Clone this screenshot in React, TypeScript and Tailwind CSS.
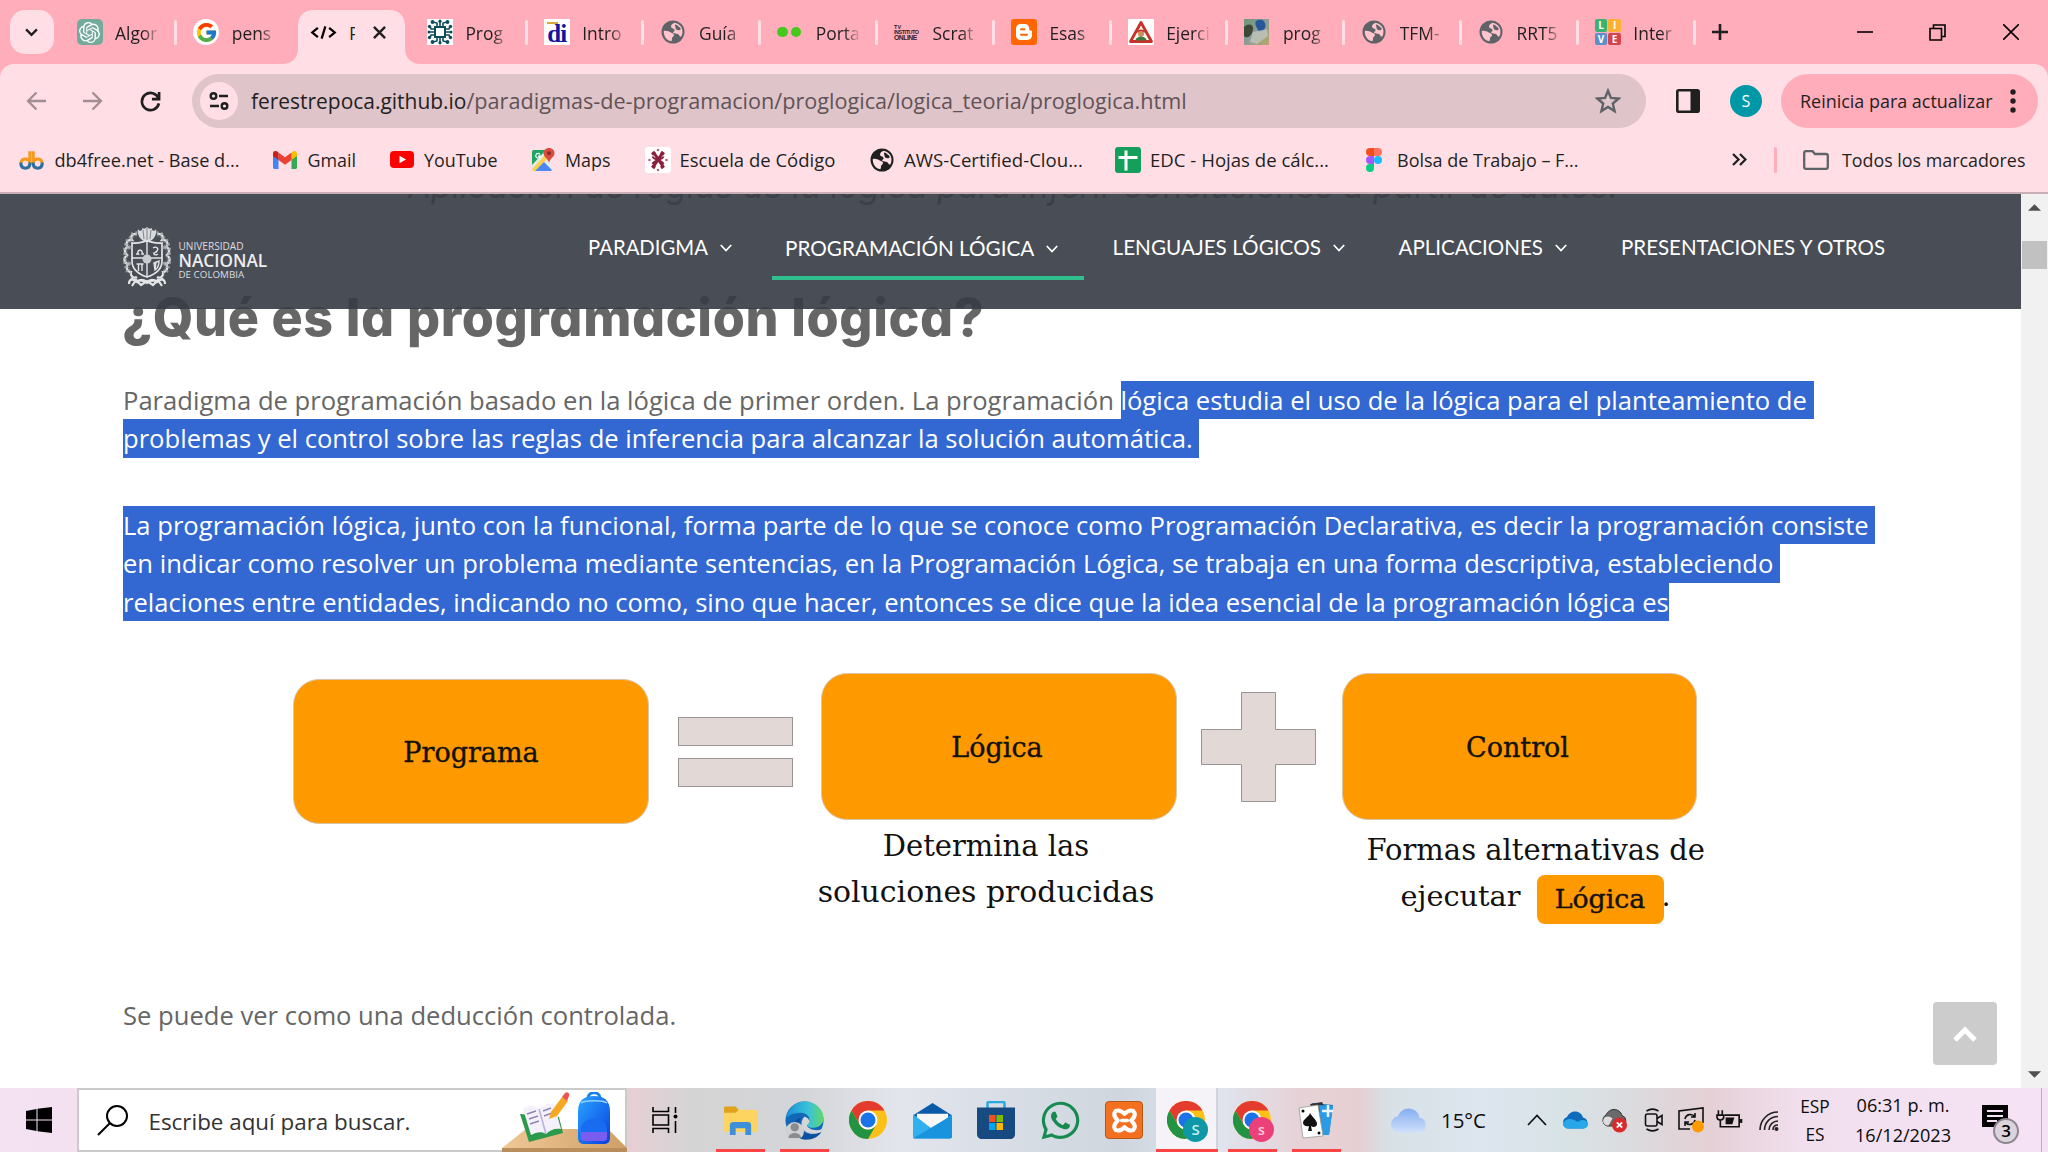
import type { ReactNode } from 'react';
import { FcGoogle } from 'react-icons/fc';
import { FaWhatsapp } from 'react-icons/fa';
import { SiOpenai } from 'react-icons/si';

const OPEN = "font-['Open_Sans',sans-serif]";
const SLAB = "font-['DejaVu_Serif',serif]";

/* ---------- favicons ---------- */

function Globe({ color, land = '#ffc4cd' }: { color: string; land?: string }) {
  return (
    <svg viewBox="0 0 24 24" className="h-[24px] w-[24px]">
      <circle cx="12" cy="12" r="11.500" fill={color} />
      <path d="M2.800 11c2.500-.6 5 .2 7 1.600 1.500 1 3.200.6 3.200 2.400s-2 1.500-2 3.500c0 1.300-.2 2-.8 2.800C6 20.500 2.500 16.500 2.800 11z" fill={land} />
      <path d="M13.500 2.800c-1.800 1-3.500 1.700-3.500 3.700s2.600 1.500 3.500 3.200-2.500 2-1 3.300 4.500.2 5.500 2 1.500 1.800 2.500 1.300c2.500-5.500.5-12-7-13.500z" fill={land} />
      <path d="M14.500 4.500c2 .3 2.700 2 4 2.800s1.800 2.700-.2 3-3.800-.8-3.800-2.500-1.200-2.500 0-3.300z" fill={color} />
    </svg>
  );
}

function ChipIcon() {
  return (
    <svg viewBox="0 0 26 26" className="h-[26px] w-[26px]">
      <rect width="26" height="26" fill="#fff" />
      <g stroke="#0f4c5c" strokeWidth="1.600" fill="none">
        <rect x="8" y="8" width="10" height="10" strokeWidth="2" />
        <path d="M10 7V4L6 3M13 7V2M16 7V4l4-1M10 19v3l-4 1M13 19v5M16 19v3l4 1M7 10H4L3 7M7 13H2M7 16H4l-1 3M19 10h3l1-3M19 13h5M19 16h3l1 3" />
      </g>
      <g fill="#0f4c5c">
        <circle cx="5.500" cy="3" r="1.900" /><circle cx="20.500" cy="3" r="1.900" /><circle cx="5.500" cy="23" r="1.900" /><circle cx="20.500" cy="23" r="1.900" />
        <circle cx="13" cy="2.200" r="1.600" /><circle cx="13" cy="23.800" r="1.600" />
        <circle cx="2.500" cy="7.500" r="1.700" /><circle cx="2" cy="13" r="1.500" /><circle cx="2.500" cy="18.500" r="1.700" /><circle cx="23.500" cy="7.500" r="1.700" /><circle cx="24" cy="13" r="1.500" /><circle cx="23.500" cy="18.500" r="1.700" />
      </g>
    </svg>
  );
}

function DiIcon() {
  return (
    <span className="relative flex h-[26px] w-[26px] items-end justify-center bg-white font-['Liberation_Serif',serif] text-[25px] leading-[23px] font-bold tracking-[-1px] text-[#1414a0]">
      <span className="absolute top-[3px] left-[3px] h-[2px] w-[11px] bg-[#d9a63a]" />
      di
    </span>
  );
}

function InstitutoIcon() {
  return (
    <span className="flex h-[26px] w-[26px] flex-col justify-center font-['Liberation_Sans',sans-serif] text-[5.500px] leading-[5px] font-bold text-[#3a1a22]">
      <span>TV</span>
      <span className="tracking-[-0.500px]">INSTITUTO</span>
      <span className="text-[6.800px] tracking-[-0.500px]">ONLINE</span>
    </span>
  );
}

function BloggerIcon() {
  return (
    <svg viewBox="0 0 26 26" className="h-[26px] w-[26px]">
      <rect width="26" height="26" rx="3" fill="#ff6600" />
      <path d="M9.500 5h4.300c2.700 0 4.400 2 4.400 4.500 0 1.500.3 2 1.300 2 .9 0 1.500.4 1.500 1.500v3.300c0 2.800-2 4.700-4.600 4.700H9.600C7 21 5 19 5 16.400V9.700C5 7 7 5 9.500 5z" fill="#fff" />
      <path d="M10 10.200h3.500M10 15.800h6" stroke="#ff6600" strokeWidth="2" strokeLinecap="round" />
    </svg>
  );
}

function WarnIcon() {
  return (
    <svg viewBox="0 0 26 26" className="h-[26px] w-[26px]">
      <rect width="26" height="26" fill="#fff" />
      <path d="M13 3.500 23.500 22.500H2.500z" fill="#fffdf0" stroke="#c8312b" strokeWidth="2.800" strokeLinejoin="round" />
      <path d="M9 13.500c0-4 8-4 8 0z" fill="#c8312b" />
      <circle cx="13" cy="15" r="3" fill="#c98f60" />
      <path d="M7.500 21.500c0-5 11-5 11 0z" fill="#3a7a3c" />
    </svg>
  );
}

function PhotoIcon() {
  return (
    <svg viewBox="0 0 26 26" className="h-[26px] w-[26px]">
      <defs><linearGradient id="photo" x1="0" y1="0" x2="1" y2="1"><stop offset="0" stopColor="#6f9478" /><stop offset=".5" stopColor="#8d9c98" /><stop offset="1" stopColor="#b5a868" /></linearGradient></defs>
      <rect width="25" height="26" fill="url(#photo)" />
      <path d="M12 2c5-3 11 0 9 7-1 4-6 5-7 2s-4-6-2-9z" fill="#27579b" />
      <path d="M0 8c4-4 9-3 9 1s-2 8-5 9-5-1-4-4z" fill="#3c4736" />
      <path d="M9 13l14-3 1 7-11 8-7-2z" fill="#c0c6bb" opacity=".8" />
    </svg>
  );
}

function LiveIcon() {
  return (
    <span className="grid h-[26px] w-[26px] grid-cols-2 gap-px font-['Open_Sans',sans-serif] text-[10px] leading-[12px] font-bold text-white">
      <span className="rounded-[2px] bg-[#3cb371] text-center">L</span>
      <span className="rounded-[2px] bg-[#fbb034] text-center">I</span>
      <span className="rounded-[2px] bg-[#5a8fcb] text-center">V</span>
      <span className="rounded-[2px] bg-[#d7434c] text-center">E</span>
    </span>
  );
}

function CodeIcon() {
  return (
    <svg viewBox="0 0 28 16" className="h-[15px] w-[27px]" fill="none" stroke="#000" strokeWidth="2.400">
      <path d="M8 3 2 8l6 5M20 3l6 5-6 5M16 1.500 12 14.500" />
    </svg>
  );
}

/* ---------- tab strip ---------- */

const tabs: { icon: ReactNode; label: string; sep: boolean; active?: boolean }[] = [
  { icon: <span className="flex h-[26px] w-[26px] items-center justify-center rounded-[5px] bg-[#74aa9c]"><SiOpenai className="h-[21px] w-[21px] text-white" /></span>, label: 'Algor', sep: true },
  { icon: <span className="flex h-[26px] w-[26px] items-center justify-center rounded-full bg-white"><FcGoogle className="h-[23px] w-[23px]" /></span>, label: 'pens', sep: false },
  { icon: <CodeIcon />, label: 'P', sep: false, active: true },
  { icon: <ChipIcon />, label: 'Prog', sep: true },
  { icon: <DiIcon />, label: 'Intro', sep: true },
  { icon: <Globe color="#5f6368" />, label: 'Guía', sep: true },
  { icon: <span className="flex h-[26px] w-[26px] items-center gap-[3px]"><span className="h-[10px] w-[10.500px] rounded-full bg-[#43c81e]" /><span className="h-[10px] w-[10.500px] rounded-full bg-[#43c81e]" /></span>, label: 'Porta', sep: true },
  { icon: <InstitutoIcon />, label: 'Scrat', sep: true },
  { icon: <BloggerIcon />, label: 'Esas', sep: true },
  { icon: <WarnIcon />, label: 'Ejerci', sep: true },
  { icon: <PhotoIcon />, label: 'prog', sep: true },
  { icon: <Globe color="#5f6368" />, label: 'TFM-', sep: true },
  { icon: <Globe color="#5f6368" />, label: 'RRT5', sep: true },
  { icon: <LiveIcon />, label: 'Inter', sep: true },
];

function TabStrip() {
  return (
    <div className="flex h-[64px] items-start bg-[#ffadbb]">
      <div className="mt-[10px] ml-[9.500px] flex h-[44px] w-[44.500px] items-center justify-center rounded-[15px] bg-[#ffdfe5]">
        <svg viewBox="0 0 14 10" className="h-[9px] w-[13px]" fill="none" stroke="#1f1f1f" strokeWidth="2.600"><path d="m1 1.500 6 6 6-6" /></svg>
      </div>
      <div className="ml-[5.500px] flex">
        {tabs.map((t, i) =>
          t.active ? (
            <div key={i} className="relative flex h-[64px] w-[116.800px] items-center pl-[17px]">
              <svg viewBox="0 0 139 54" className="absolute top-[10px] left-[-11px] h-[54px] w-[139px]">
                <path d="M0 54c10 0 16-6 16-16V16C16 6 22 0 32 0h75c10 0 16 6 16 16v22c0 10 6 16 16 16z" fill="#ffdfe5" />
              </svg>
              <span className="relative">{t.icon}</span>
              <span className={`relative ml-[12px] w-[6px] overflow-hidden pt-[1px] text-[18px] leading-[24px] text-[#1f1f1f] ${OPEN}`}>{t.label}</span>
              <svg viewBox="0 0 14 14" className="relative ml-[18px] h-[13px] w-[13px]" stroke="#1f1f1f" strokeWidth="2.600"><path d="M1 1l12 12M13 1 1 13" /></svg>
            </div>
          ) : (
            <div key={i} className="flex h-[64px] w-[116.800px] items-center pl-[17px]">
              <span className="flex w-[26px] shrink-0 justify-center">{t.icon}</span>
              <span className={`ml-[12.500px] w-[43px] overflow-hidden mask-[linear-gradient(to_right,black_65%,transparent_105%)] pt-[2px] text-[17.400px] leading-[24px] whitespace-nowrap text-[#1f1f1f] ${OPEN}`}>{t.label}</span>
              {t.sep && <span className="mr-[-1px] ml-auto h-[25px] w-[3px] rounded-full bg-[#ffdfe5]" />}
            </div>
          ),
        )}
      </div>
      <div className="flex h-[64px] flex-1 items-center">
        <svg viewBox="0 0 16 16" className="ml-[17px] h-[16px] w-[16px]" stroke="#1f1f1f" strokeWidth="2.600"><path d="M8 0v16M0 8h16" /></svg>
        <svg viewBox="0 0 16 16" className="ml-auto h-[16px] w-[16px]" stroke="#000" strokeWidth="1.600"><path d="M0 8h16" /></svg>
        <svg viewBox="0 0 17 17" className="ml-[56px] h-[17px] w-[17px]" fill="none" stroke="#000" strokeWidth="1.600"><path d="M1 4.500h11.500V16H1zM4.500 4.500V1H16v11.500h-3.500" /></svg>
        <svg viewBox="0 0 16 16" className="mr-[29px] ml-[57px] h-[16px] w-[16px]" stroke="#000" strokeWidth="1.600"><path d="M0 0l16 16M16 0 0 16" /></svg>
      </div>
    </div>
  );
}

/* ---------- address bar ---------- */

function Toolbar() {
  return (
    <div className="bg-[#ffadbb]">
      <div className="flex h-[74px] items-center rounded-t-[14px] bg-[#ffdfe5]">
        <svg viewBox="0 0 20 20" className="ml-[26px] h-[20px] w-[20px]" fill="none" stroke="#a28d92" strokeWidth="2.300"><path d="M20 10H2M10.500 1.500 2 10l8.500 8.500" /></svg>
        <svg viewBox="0 0 20 20" className="ml-[36.500px] h-[20px] w-[20px]" fill="none" stroke="#a28d92" strokeWidth="2.300"><path d="M0 10h18M9.500 1.500 18 10l-8.500 8.500" /></svg>
        <svg viewBox="0 0 22 22" className="ml-[37.500px] h-[21px] w-[21px]" fill="none" stroke="#1f1f1f" strokeWidth="2.800"><path d="M19.500 8A9 9 0 1 0 19.800 13M20 1v7.500h-7.500" /></svg>
        <div className="ml-[31px] flex h-[54px] w-[1454px] items-center rounded-full bg-[#dfc4c9]">
          <span className="ml-[8px] flex h-[38px] w-[38px] items-center justify-center rounded-full bg-[#ffdfe5]">
            <svg viewBox="0 0 20 20" className="h-[20px] w-[20px]" fill="none" stroke="#1f1f1f" strokeWidth="2.400"><circle cx="4.500" cy="5" r="2.800" /><path d="M10 5h9M1 15h9" /><circle cx="15.500" cy="15" r="2.800" /></svg>
          </span>
          <span className={`ml-[13px] flex items-baseline leading-[30px] whitespace-nowrap ${OPEN}`}>
            <span className="text-[20.950px] text-[#1f1f1f]">ferestrepoca.github.io</span>
            <span className="text-[21.630px] text-[#5f5357]">/paradigmas-de-programacion/proglogica/logica_teoria/proglogica.html</span>
          </span>
          <svg viewBox="0 0 24 24" className="mr-[25px] ml-auto h-[26px] w-[26px]" fill="none" stroke="#5f6368" strokeWidth="2.200"><path d="m12 2.500 2.700 6.700 7.200.5-5.500 4.600 1.700 7L12 17.500l-6.100 3.800 1.700-7L2.100 9.700l7.200-.5z" /></svg>
        </div>
        <svg viewBox="0 0 24 24" className="ml-[30px] h-[24px] w-[24px]"><rect x="1.300" y="1.300" width="21.400" height="21.400" rx="1.500" fill="none" stroke="#1f1f1f" strokeWidth="2.600" /><path d="M14.500 1h7.500v22h-7.500z" fill="#1f1f1f" /></svg>
        <span className={`ml-[30px] flex h-[32px] w-[32px] items-center justify-center rounded-full bg-[#0097a7] text-[16px] text-white ${OPEN}`}>S</span>
        <div className="ml-[19px] flex h-[54px] w-[257px] items-center rounded-full bg-[#ffadbb] pl-[19px]">
          <span className={`text-[17.950px] whitespace-nowrap text-[#1f1f1f] ${OPEN}`}>Reinicia para actualizar</span>
          <svg viewBox="0 0 6 24" className="ml-[17px] h-[24px] w-[6px]" fill="#1f1f1f"><circle cx="3" cy="3" r="2.700" /><circle cx="3" cy="12" r="2.700" /><circle cx="3" cy="21" r="2.700" /></svg>
        </div>
      </div>
    </div>
  );
}

/* ---------- bookmarks ---------- */

const bookmarkIcons = {
  db: (
    <svg viewBox="0 0 26 24" className="h-[24px] w-[25px]" fill="none" strokeWidth="3.200">
      <path d="M2 15a4.700 4.700 0 0 1 9.300 0V3M14.800 15V3M14.800 15a4.700 4.700 0 0 1 9.300 0" stroke="#f39a1f" />
      <path d="M2 14.500v2a4.700 4.700 0 0 0 9.300 0v-2M14.800 14.500v2a4.700 4.700 0 0 0 9.300 0v-2" stroke="#2f6f9f" />
    </svg>
  ),
  gmail: (
    <svg viewBox="0 0 24 18" className="h-[18px] w-[24px]">
      <path d="M0 3v13.500C0 17.300.7 18 1.500 18H5.500V7z" fill="#4285f4" /><path d="M18.500 18h4c.8 0 1.500-.7 1.500-1.500V3l-5.500 4z" fill="#34a853" />
      <path d="M18.500 2v7L24 5V2.500C24 .3 21.500-.8 19.800.5z" fill="#fbbc04" /><path d="M5.500 9V1.500L12 6.300l6.500-4.800V9L12 13.800z" fill="#ea4335" /><path d="M0 2.500V5l5.500 4V1.500L4.200.5C2.500-.8 0 .3 0 2.500z" fill="#c5221f" />
    </svg>
  ),
  youtube: (
    <svg viewBox="0 0 24 17" className="h-[17px] w-[24px]"><rect width="24" height="17" rx="4" fill="#f00" /><path d="M9.500 4.800v7.400l6.500-3.700z" fill="#fff" /></svg>
  ),
  maps: (
    <svg viewBox="0 0 24 24" className="h-[24px] w-[24px]">
      <rect x="1" y="2" width="20" height="21" rx="2" fill="#e9e9e9" /><path d="M1 4c0-1.200.8-2 2-2h12L1 17z" fill="#1fa463" /><path d="M3 23 12 13l9 9-1 1z" fill="#4a89f3" />
      <path d="M1 21 16 5l3 3L4 23H3c-1 0-2-1-2-2z" fill="#fbd14b" /><path d="M18 0c3.300 0 5.500 2.400 5.500 5.300 0 3.700-4.500 5-5.500 9.700-1-4.700-5.500-6-5.500-9.700C12.500 2.400 14.700 0 18 0z" fill="#dd4b3e" /><circle cx="18" cy="5.200" r="2" fill="#822f2b" />
      <path d="M9 6.500a2.300 2.300 0 1 0 .3 1.700H7" stroke="#fff" strokeWidth="1.200" fill="none" />
    </svg>
  ),
  escuela: (
    <svg viewBox="0 0 26 26" className="h-[26px] w-[26px]">
      <rect width="26" height="26" rx="3" fill="#fff" />
      <g fill="none" stroke="#8a1f3d" strokeWidth="3">
        <path d="M9 6l9 13.500M17.500 6 8.500 19.500" />
        <path d="M7.500 9.500c1.500 4 9.500 3.500 11 7.500M18.500 9.500c-1.500 4-9.500 3.500-11 7.500" strokeWidth="2" />
        <path d="M7 7.500 10 5M16 5l3 2.500M7 18.500l3 2.500M16 21l3-2.500" />
      </g>
      <g fill="#b5647c"><circle cx="13" cy="3" r="1.300" /><circle cx="13" cy="23" r="1.300" /><circle cx="4.500" cy="13" r="1.300" /><circle cx="21.500" cy="13" r="1.300" /></g>
    </svg>
  ),
  edc: (
    <svg viewBox="0 0 26 26" className="h-[26px] w-[26px]"><rect width="26" height="26" rx="3" fill="#14a05a" /><path d="M11 3.500v20M3.500 10.500h19" stroke="#fff" strokeWidth="3" /></svg>
  ),
  figma: (
    <svg viewBox="0 0 16 24" className="h-[24px] w-[16px]">
      <path d="M4 0h4v8H4a4 4 0 0 1 0-8z" fill="#f24e1e" /><path d="M8 0h4a4 4 0 0 1 0 8H8z" fill="#ff7262" /><path d="M4 8h4v8H4a4 4 0 0 1 0-8z" fill="#a259ff" /><circle cx="12" cy="12" r="4" fill="#1abcfe" /><path d="M4 16h4v4a4 4 0 1 1-4-4z" fill="#0acf83" />
    </svg>
  ),
};

function Bookmark({ icon, label, cls, gap }: { icon: ReactNode; label: string; cls: string; gap: string }) {
  return (
    <span className={`flex shrink-0 items-center ${cls}`}>
      <span className={`flex shrink-0 ${gap}`}>{icon}</span>
      <span className="whitespace-nowrap">{label}</span>
    </span>
  );
}

function Bookmarks() {
  return (
    <div className={`flex h-[56px] items-center border-b-2 border-[#c9b0b6] bg-[#ffdfe5] pb-[10.500px] pl-[19px] leading-[24px] text-[#1f1f1f] ${OPEN}`}>
      <Bookmark icon={bookmarkIcons.db} label="db4free.net - Base d..." cls="w-[254px] text-[18.150px]" gap="w-[35.500px]" />
      <Bookmark icon={bookmarkIcons.gmail} label="Gmail" cls="w-[117px] text-[17.900px]" gap="w-[34.500px]" />
      <Bookmark icon={bookmarkIcons.youtube} label="YouTube" cls="w-[141px] text-[17.900px]" gap="w-[34px]" />
      <Bookmark icon={bookmarkIcons.maps} label="Maps" cls="w-[114px] text-[17.900px]" gap="w-[34px]" />
      <Bookmark icon={bookmarkIcons.escuela} label="Escuela de Código" cls="w-[225px] text-[18.500px]" gap="w-[34.500px]" />
      <Bookmark icon={<Globe color="#1f1f1f" land="#ffdfe5" />} label="AWS-Certified-Clou..." cls="w-[245px] text-[18.640px]" gap="w-[34px]" />
      <Bookmark icon={bookmarkIcons.edc} label="EDC - Hojas de cálc..." cls="w-[251px] text-[18.600px]" gap="w-[35px]" />
      <Bookmark icon={bookmarkIcons.figma} label="Bolsa de Trabajo – F..." cls="w-[366px] text-[18px]" gap="w-[31px]" />
      <svg viewBox="0 0 16 14" className="h-[13px] w-[15px]" fill="none" stroke="#1f1f1f" strokeWidth="2.400"><path d="m1 1 6 6-6 6M8.500 1l6 6-6 6" /></svg>
      <span className="ml-[27px] h-[26px] w-[3px] rounded-full bg-[#ffadbb]" />
      <svg viewBox="0 0 26 20" className="ml-[26px] h-[20px] w-[26px]" fill="none" stroke="#5f6368" strokeWidth="2.300"><path d="M1.200 3c0-1 .8-1.800 1.800-1.800h6.500L12 4h11c1 0 1.800.8 1.800 1.800V17c0 1-.8 1.800-1.800 1.800H3c-1 0-1.800-.8-1.800-1.800z" /></svg>
      <span className="ml-[13px] text-[17.850px] whitespace-nowrap">Todos los marcadores</span>
    </div>
  );
}

/* ---------- site header ---------- */

function Crest() {
  return (
    <svg viewBox="0 0 48 61" className="h-[61px] w-[48px]" fill="none" stroke="#e4e5e7">
      <path d="M24 1c2 2 3 2 5 1-1 3 3 4 4 1 1 4-1 8-3 10-4 4-8 4-12 0-2-2-4-6-3-10 1 3 5 2 4-1 2 1 3 1 5-1z" fill="#d9dadd" stroke="none" />
      <path d="M24 2v12M20 4l1 9M28 4l-1 9" stroke="#6b6f76" strokeWidth=".8" />
      <path d="M9 17c5 1 10-1 15-2 5 1 10 3 15 2v18c0 8-6 13-15 16C15 48 9 43 9 35z" strokeWidth="1.700" />
      <path d="M24 16v34M9 32h30" strokeWidth="1.400" />
      <circle cx="24" cy="33" r="4.500" fill="#c9cbcf" stroke="none" />
      <path d="M13 28h2.500c-3-4 5-6 3.500 0H21M30 22c3-2 6 0 4 3s-4 1-3 3 4 0 4 0M13.500 38h7M15.500 38v7M19 38v7M31 37l5-2c0 4-1 7-4 9zM33 37l-1 6" strokeWidth="1.400" />
      <path d="M14 8c-5-1-7 3-5 6-5-1-7 4-4 7-4 1-4 6-1 8-4 3-3 8 1 9-3 4 0 8 3 8-1 4 3 7 6 5M34 8c5-1 7 3 5 6 5-1 7 4 4 7 4 1 4 6 1 8 4 3 3 8-1 9 3 4 0 8-3 8 1 4-3 7-6 5" strokeWidth="2.200" />
      <path d="M14 8c-5-1-7 3-5 6-5-1-7 4-4 7-4 1-4 6-1 8-4 3-3 8 1 9-3 4 0 8 3 8M34 8c5-1 7 3 5 6 5-1 7 4 4 7 4 1 4 6 1 8 4 3 3 8-1 9 3 4 0 8-3 8" stroke="#a9acb1" strokeWidth="5" strokeDasharray="1.500 2" opacity=".8" />
      <path d="M6 58c0-6 5-5 8-2 3-3 7-3 10 0 3-3 7-3 10 0 3-3 8-4 8 2M8 52c5 5 10 0 16 5 6-5 11 0 16-5M9 60l4-6 5 5 6-4 6 4 5-5 4 6" strokeWidth="2.200" />
    </svg>
  );
}

function NavItem({ label, cls, arrow = true, active = false }: { label: string; cls: string; arrow?: boolean; active?: boolean }) {
  return (
    <span className={`flex shrink-0 items-center ${active ? 'mt-[2px] h-[61px] border-b-4 border-[#2fc08e]' : 'h-[60px]'} ${cls}`}>
      {label}
      {arrow && <svg viewBox="0 0 12 8" className="mt-[2px] ml-[12px] h-[8px] w-[12px]" fill="none" stroke="#fff" strokeWidth="1.800"><path d="m.8 1 5.200 5.500L11.200 1" /></svg>}
    </span>
  );
}

function SiteHeader() {
  return (
    <header className="absolute inset-x-0 top-0 flex h-[115px] items-start bg-[#373b44]/91">
      <div className="mt-[32px] ml-[123px] flex w-[465px] items-start gap-[7.500px]">
        <Crest />
        <div className={`pt-[14px] text-[#dddee1] ${OPEN}`}>
          <div className="text-[10.100px] leading-[12px]">UNIVERSIDAD</div>
          <div className="text-[17.200px] leading-[17px] font-semibold text-[#eeeef0]">NACIONAL</div>
          <div className="text-[9.800px] leading-[12px]">DE COLOMBIA</div>
        </div>
      </div>
      <nav className="mt-[23px] flex font-['Lato',sans-serif] leading-[28px] whitespace-nowrap text-white">
        <NavItem label="PARADIGMA" cls="w-[184px] text-[20.310px]" />
        <NavItem label="PROGRAMACIÓN LÓGICA" active cls="w-[312px] pl-[13px] text-[20.710px]" />
        <NavItem label="LENGUAJES LÓGICOS" cls="w-[286px] pl-[28.500px] text-[20.710px]" />
        <NavItem label="APLICACIONES" cls="w-[251px] pl-[28.500px] text-[20.560px]" />
        <NavItem label="PRESENTACIONES Y OTROS" arrow={false} cls="text-[20.500px]" />
      </nav>
    </header>
  );
}

/* ---------- page content ---------- */

function Selected({ children }: { children: ReactNode }) {
  return <span className="inline-block h-[38.400px] bg-[#3367d1] text-white">{children}</span>;
}

function Block({ label, cls }: { label: string; cls: string }) {
  return (
    <div className={`flex items-center justify-center rounded-[26px] border border-[#d9c6a8] bg-[#ff9900] pt-[3px] text-[27px] text-[#111] [-webkit-text-stroke:0.400px_#111] ${SLAB} ${cls}`}>
      {label}
    </div>
  );
}

function Diagram() {
  return (
    <div className={`mt-[52.500px] ml-[293px] flex h-[262px] items-start text-[#111] ${SLAB}`}>
      <Block label="Programa" cls="mt-[5.500px] h-[145px] w-[356px]" />
      <div className="mt-[43.500px] ml-[28.500px] flex w-[115px] flex-col gap-[12px]">
        <div className="h-[29px] border border-[#999494] bg-[#e2d9d6]" />
        <div className="h-[29px] border border-[#999494] bg-[#e2d9d6]" />
      </div>
      <div className="ml-[28px] w-[356px]">
        <Block label="Lógica" cls="h-[147px] w-[356px] pr-[3px]" />
        <div className="mt-[2.500px] -ml-[12.500px] w-[356px] text-center leading-[46px]">
          <div className="text-[29px]">Determina las</div>
          <div className="text-[29.900px] whitespace-nowrap">soluciones producidas</div>
        </div>
      </div>
      <svg viewBox="0 0 115 110" className="mt-[19px] ml-[24.500px] h-[110px] w-[115px]"><path d="M40.500.500h34v37h40v35h-40v37h-34v-37H.500v-35h40z" fill="#e2d9d6" stroke="#999494" /></svg>
      <div className="ml-[25.500px] w-[355px] shrink-0">
        <Block label="Control" cls="h-[147px] w-[355px] pr-[3px]" />
        <div className="mt-[6.500px] ml-[25px] leading-[46px] whitespace-nowrap">
          <div className="text-[29px]">Formas alternativas de</div>
          <div className="flex pl-[34px] text-[28.750px]">
            <span className="w-[136px]">ejecutar</span>
            <span className="mt-[2px] flex h-[49px] w-[127px] items-center justify-center rounded-[8px] bg-[#ff9900] text-[26.800px] [-webkit-text-stroke:0.400px_#111]">Lógica</span>
            <span className="-ml-[2px]">.</span>
          </div>
        </div>
      </div>
    </div>
  );
}

function Page() {
  return (
    <div className="flex h-[894px] bg-white">
      <main className={`relative w-[2021px] overflow-hidden text-[25.600px] leading-[40px] whitespace-nowrap text-[#666] ${OPEN}`}>
        <p className="-mt-[28px] h-[40px] pl-[5px] text-center font-['Inter',sans-serif] text-[33.700px] leading-[40px] italic [font-feature-settings:'cv11']">
          Aplicación de reglas de la lógica para inferir conclusiones a partir de datos.
        </p>
        <h1 className="mt-[82px] ml-[122px] h-[60px] font-['Inter',sans-serif] text-[52px] leading-[60px] font-extrabold tracking-[0.620px] text-[#666] [font-feature-settings:'cv11']">
          ¿Qué es la programación lógica?
        </h1>
        <div className="mt-[33px] ml-[123px] h-[76.800px]">
          <div className="flex h-[38.400px] whitespace-pre">
            {'Paradigma de programación basado en la lógica de primer orden. La programación '}
            <Selected>{'lógica estudia el uso de la lógica para el planteamiento de '}</Selected>
          </div>
          <div className="flex h-[38.400px] whitespace-pre"><Selected>{'problemas y el control sobre las reglas de inferencia para alcanzar la solución automática. '}</Selected></div>
        </div>
        <div className="mt-[48px] ml-[123px] h-[115.200px] leading-[39.200px]">
          <div className="flex h-[38.400px] whitespace-pre"><Selected>{'La programación lógica, junto con la funcional, forma parte de lo que se conoce como Programación Declarativa, es decir la programación consiste '}</Selected></div>
          <div className="flex h-[38.400px] whitespace-pre"><Selected>{'en indicar como resolver un problema mediante sentencias, en la Programación Lógica, se trabaja en una forma descriptiva, estableciendo '}</Selected></div>
          <div className="flex h-[38.400px] whitespace-pre"><Selected>relaciones entre entidades, indicando no como, sino que hacer, entonces se dice que la idea esencial de la programación lógica es</Selected></div>
        </div>
        <Diagram />
        <p className="mt-[60.500px] ml-[123px]">Se puede ver como una deducción controlada.</p>
        <div className="absolute top-[808px] left-[1933px] flex h-[63px] w-[64px] items-center justify-center rounded-[4px] bg-[#ccc]">
          <svg viewBox="0 0 24 16" className="h-[16px] w-[24px]" fill="none" stroke="#fff" strokeWidth="5"><path d="M2 14 12 4l10 10" /></svg>
        </div>
        <SiteHeader />
      </main>
      <div className="flex w-[27px] flex-col items-center bg-[#f1f1f1]">
        <svg viewBox="0 0 14 7" className="mt-[10px] h-[7px] w-[13px]" fill="#505050"><path d="M7 0l7 7H0z" /></svg>
        <div className="mt-[30px] h-[28px] w-[25px] bg-[#c1c1c1]" />
        <svg viewBox="0 0 14 7" className="mt-auto mb-[10px] h-[7px] w-[13px]" fill="#505050"><path d="M0 0h14L7 7z" /></svg>
      </div>
    </div>
  );
}

/* ---------- taskbar ---------- */

function Chrome() {
  return (
    <svg viewBox="0 0 48 48" className="h-[38px] w-[38px]">
      <circle cx="24" cy="24" r="24" fill="#fbc116" />
      <path d="M3.200 12A24 24 0 0 1 44.800 12L24 12 13.600 30z" fill="#e33b2e" />
      <path d="M3.200 12A24 24 0 0 0 24 48l10.400-18A12 12 0 0 1 13.600 30z" fill="#229342" />
      <circle cx="24" cy="24" r="12" fill="#fff" />
      <circle cx="24" cy="24" r="9.500" fill="#1a73e8" />
    </svg>
  );
}

function TaskItem({ children, cls = 'w-[64px]', line = '' }: { children: ReactNode; cls?: string; line?: string }) {
  return (
    <div className={`relative flex h-[64px] shrink-0 items-center justify-center ${cls}`}>
      {children}
      {line && <span className={`absolute bottom-0 h-[3px] bg-[#fc4444] ${line}`} />}
    </div>
  );
}

function StudyArt() {
  return (
    <svg viewBox="0 0 125 60" className="mt-auto h-[60px] w-[125px]">
      <defs>
        <linearGradient id="desk" x1="0" x2="1"><stop offset="0" stopColor="#f0c896" /><stop offset="1" stopColor="#cf9f66" /></linearGradient>
        <linearGradient id="bag" x1="0" x2="1" y1="0" y2="1"><stop offset="0" stopColor="#29a6ff" /><stop offset="1" stopColor="#0a3fe0" /></linearGradient>
      </defs>
      <path d="M24 37h82l19 19H0z" fill="url(#desk)" /><path d="M0 56h125v4H0z" fill="#b98e5c" />
      <path d="m18 22 9 28 34-9-4-16z" fill="#2c9a4b" /><path d="M21 17c6-4 12-4 16 0 4-4 9-6 15-5l7 25c-6-1-11 1-15 5-4-3-10-2-15 1z" fill="#f4f1fb" />
      <path d="m37 17 7 25" stroke="#b9aee0" strokeWidth="1.500" /><path d="m25 22 9-3M27 27l9-3M28 32l9-3M41 19l8-3M42 24l8-3" stroke="#8c86b5" strokeWidth="1.400" />
      <path d="m47 27 2-7L60 5l6 4-11 15z" fill="#f7a823" /><path d="m60 5 3-4c2-2 5 0 4 3l-2 5z" fill="#ef5350" />
      <path d="M86 6c0-7 12-7 12 0" fill="none" stroke="#1182ee" strokeWidth="3" />
      <path d="M76 20C76 8 82 4 92 4s16 4 16 16v25c0 5-2 7-6 7H82c-4 0-6-2-6-7z" fill="url(#bag)" />
      <path d="M79 48V38c0-7 5-11 13-11s13 4 13 11v10z" fill="#176cf0" /><path d="M79 40h26v5c0 3-1 4-4 4H83c-3 0-4-1-4-4z" fill="#7a5cf0" />
      <path d="M79 11c4-3 22-3 26 0" stroke="#8fd0ff" strokeWidth="1.500" fill="none" />
    </svg>
  );
}

function Taskbar() {
  return (
    <div className={`flex h-[64px] bg-[linear-gradient(90deg,#f4e2f3_0px,#f3e1f0_80px,#e6cfd4_630px,#d5d4d5_690px,#d3d5d8_800px,#e3e5ec_900px,#d9dee6_1000px,#cfd6de_1120px,#dfe4ee_1220px,#e6d2d6_1300px,#e6cfd3_1360px,#d7e1e6_1390px,#dde5ee_1480px,#d8e3e7_1560px,#dcdadd_1640px,#e4d0d5_1710px,#f2dfee_1800px,#f5e3f5_2048px)] text-[#0c0c0c] ${OPEN}`}>
      <div className="flex w-[77px] items-center justify-center">
        <svg viewBox="0 0 26 26" className="h-[26px] w-[26px]" fill="#000"><path d="M0 4l10.500-2v10.500H0zM11.500 1.800 26 0v12.500H11.500zM0 13.500h10.500V24L0 22zM11.500 13.500H26V26l-14.500-1.800z" /></svg>
      </div>
      <div className="flex h-[64px] w-[550px] items-center border-2 border-[#cacaca] bg-white">
        <svg viewBox="0 0 31 31" className="ml-[18px] h-[31px] w-[31px]" fill="none" stroke="#000" strokeWidth="2"><circle cx="20" cy="11" r="10" /><path d="M13 18 1 30" /></svg>
        <span className="ml-[20.500px] pt-[3px] text-[22.400px] whitespace-nowrap text-[#333]">Escribe aquí para buscar.</span>
        <div className="mt-[2px] -mr-[2px] ml-auto flex h-[62px] items-end"><StudyArt /></div>
      </div>
      <div className="ml-[6px] flex">
        <TaskItem>
          <svg viewBox="0 0 26 26" className="h-[26px] w-[26px]" fill="none" stroke="#000" strokeWidth="1.600"><path d="M1 0v4.500h15.500V0M1 26v-4.500h15.500V26M1 8h15.500v10H1zM23.500 0v6M23.500 14v12" /><circle cx="23.500" cy="9.500" r="2" fill="#000" stroke="none" /></svg>
        </TaskItem>
        <TaskItem cls="ml-[11px] w-[64px]" line="w-[49px]">
          <svg viewBox="0 0 36 30" className="h-[29px] w-[35px]"><path d="M1 2c0-1 .8-1.500 2-1.500h10l3.500 4H34V12H1z" fill="#dfa21a" /><path d="M1 7h12l3-3h17c1.200 0 2 .8 2 2v19c0 1.500-.8 2-2 2H3c-1.200 0-2-.5-2-2z" fill="#fdd45f" /><path d="M7 30V20c0-2.500 1.500-3.500 3.500-3.500h15c2 0 3.500 1 3.500 3.500v10h-6v-7H13v7z" fill="#3d8fd8" /></svg>
        </TaskItem>
        <TaskItem line="w-[49px]">
          <svg viewBox="0 0 40 40" className="h-[39px] w-[39px]">
            <defs><linearGradient id="edge" x1="0" x2="1"><stop offset="0" stopColor="#1b8fd8" /><stop offset=".6" stopColor="#38c3d8" /><stop offset="1" stopColor="#62d86a" /></linearGradient></defs>
            <circle cx="20" cy="20" r="19.500" fill="#1267b8" /><path d="M1 18C3 7 11 .5 20 .5c11 0 19.500 8 19.500 17 0 6-4.500 10-10.500 10-4 0-6-1.500-6-3s2-2.500 2-5.500c0-4-4-7-9-7C9 12 3 15 1 18z" fill="url(#edge)" />
            <path d="M17 17c-3 3-3 9 0 13 4 5 12 6 19 2 1-.5 1 .5.500 1-4 5-10 7-16 6.500C14 39 9 33 9 27s3-9 8-10z" fill="#0d4f9e" /><path d="M20 16c3 1 5 3 5 5s-3 3-2 5 5 4 9 4 6-1 8-3v3c-1 1-2 2-4 2-6 3-15 2-18-4-2-4-1-9 2-12z" fill="#d5d5d8" />
            <circle cx="10" cy="31" r="9.500" fill="#cfd1d3" /><circle cx="10" cy="27" r="4.200" fill="#8a8d90" /><path d="M3.500 38c0-7 13-7 13 0z" fill="#8a8d90" />
          </svg>
        </TaskItem>
        <TaskItem><Chrome /></TaskItem>
        <TaskItem>
          <svg viewBox="0 0 40 38" className="h-[37px] w-[39px]"><path d="M1 13 20 1l19 12v4H1z" fill="#0a5ba8" /><path d="M4 12h32v14H4z" fill="#f7f7f7" /><path d="M0 12.500 20 28l20-15.500V36c0 1-.8 1.500-2 1.500H2C.8 37.500 0 37 0 36z" fill="#30b0ee" /><path d="m0 37.500 40-24V36c0 1-.8 1.500-2 1.500z" fill="#1a93de" /></svg>
        </TaskItem>
        <TaskItem>
          <svg viewBox="0 0 38 38" className="h-[38px] w-[38px]"><path d="M10.500 8V2.500c0-1 .5-1.500 1.500-1.500h14c1 0 1.500.5 1.500 1.500V8" fill="none" stroke="#2aa8e8" strokeWidth="2.600" /><path d="M0 6.500h38V33c0 3-2 5-5 5H5c-3 0-5-2-5-5z" fill="#164a80" /><path d="M12 14h6.500v7H12z" fill="#f25022" /><path d="M19.500 14H26v7h-6.500z" fill="#7fba00" /><path d="M12 22h6.500v7H12z" fill="#00a4ef" /><path d="M19.500 22H26v7h-6.500z" fill="#ffb900" /></svg>
        </TaskItem>
        <TaskItem><FaWhatsapp className="h-[43px] w-[43px] text-[#168a4f]" /></TaskItem>
        <TaskItem>
          <span className="flex h-[38px] w-[38px] items-center justify-center rounded-[4px] border border-[#b35a16] bg-[#f37021]">
            <svg viewBox="0 0 30 30" className="h-[29px] w-[29px]" fill="none" stroke="#fff" strokeWidth="4.200" strokeLinecap="round" strokeLinejoin="round"><path d="M6 5c3-1 6 0 9 3 3-3 6-4 9-3 3 3 1 7-2 10 3 3 5 7 2 10-3 1-6 0-9-3-3 3-6 4-9 3-3-3-1-7 2-10C5 12 3 8 6 5z" /><path d="M12 15h6" strokeWidth="3.500" /></svg>
          </span>
        </TaskItem>
        <TaskItem cls="w-[62px] bg-[#f5f3f7] border-r-2 border-[#d3d3db]" line="left-0 w-[62px]">
          <span className="relative"><Chrome /><span className="absolute top-[16px] left-[16px] flex h-[25px] w-[25px] items-center justify-center rounded-full bg-[#0e97a7] text-[15px] font-semibold text-[#c8eef0]">S</span></span>
        </TaskItem>
        <TaskItem cls="w-[66px] ml-[1px]" line="w-[49px]">
          <span className="relative"><Chrome /><span className="absolute top-[16px] left-[16px] flex h-[25px] w-[25px] items-center justify-center rounded-full bg-[#ec407a] text-[14px] font-semibold text-[#fbd0de]">s</span></span>
        </TaskItem>
        <TaskItem cls="w-[62px]" line="w-[49px]">
          <svg viewBox="0 0 37 38" className="h-[38px] w-[37px]"><path d="m14 2 21 2-4 30-10-2z" fill="#1478c8" /><path d="m12 3 12-2 2 4-1 27z" fill="#333" /><path d="m21 4 14 1-4 29-7 0z" fill="#2b9be6" /><path d="M30 4v12M24 10h11" stroke="#e9f5ff" strokeWidth="2.500" /><path d="m1 7 19-3 5 31-20 2z" fill="#fff" stroke="#999" strokeWidth=".8" /><path d="M12 12c2 4 7 7 7 11 0 3-4 4-6 2l1 5h-4l1-5c-3 1-6-1-6-3 0-4 6-6 7-10z" fill="#111" /><circle cx="5" cy="10" r="1.500" /><circle cx="21" cy="32" r="1.500" /></svg>
        </TaskItem>
      </div>
      <div className="ml-auto flex h-[64px] w-[658px] items-center">
        <svg viewBox="0 0 40 26" className="h-[25px] w-[39px]"><defs><linearGradient id="cl" x1="0" y1="0" x2="0" y2="1"><stop offset="0" stopColor="#86aef2" /><stop offset="1" stopColor="#cfe0fb" /></linearGradient></defs><path d="M9 25.500a8.500 8.500 0 0 1-1-16.900C10 3.500 14 .5 19 .5c6 0 10.500 4 11.500 9.500a8 8 0 0 1 .5 15.500z" fill="url(#cl)" /></svg>
        <span className="ml-[12px] w-[86px] pt-[1px] text-[20.440px] whitespace-nowrap">15°C</span>
        <svg viewBox="0 0 20 12" className="h-[12px] w-[20px]" fill="none" stroke="#111" strokeWidth="1.700"><path d="m1 11 9-9.500L19 11" /></svg>
        <svg viewBox="0 0 27 18" className="ml-[15px] h-[18px] w-[27px]"><path d="M6 17.500A6 6 0 0 1 5 6C7 2 10 .5 13 .5c4 0 7 2.500 8 6a5.700 5.700 0 0 1 .5 11z" fill="#0f6cbd" /><path d="M6 17.500C3 17.500.5 15 1 12c3-4 7-5 11-3l4 2c3-3 8-2.500 10 1 .5 3-1.500 5.500-4.500 5.500z" fill="#28a8ea" /></svg>
        <svg viewBox="0 0 27 24" className="mt-[2px] ml-[12px] h-[24px] w-[27px]"><path d="M6 17A6 6 0 0 1 5 6C7 2 10 .5 13 .5c4 0 7 2.500 8 6A5.500 5.500 0 0 1 21 17z" fill="#6a6a6a" stroke="#333" /><path d="M6 16.500c-4-1-5-5-2.500-8 3-2 6-1 8 1l-4 7z" fill="#ddd" /><circle cx="18.500" cy="16" r="7.500" fill="#d92b2b" /><path d="m15.800 13.300 5.400 5.400M21.200 13.300l-5.400 5.400" stroke="#fff" strokeWidth="1.800" /></svg>
        <svg viewBox="0 0 20 24" className="ml-[16px] h-[24px] w-[20px]" fill="none" stroke="#111" strokeWidth="1.600"><rect x="1.500" y="6" width="11.500" height="12" rx="2" /><path d="m13 10.500 5-3v9l-5-3M2.500 3c4-2.500 8-2.500 12 0M2.500 21c4 2.500 8 2.500 12 0" /></svg>
        <svg viewBox="0 0 27 26" className="ml-[14px] h-[26px] w-[27px]" fill="none" stroke="#111" strokeWidth="1.600"><path d="M12 22H1V4l24-3v15" /><path d="M7 12c1-5 7-6 10-2M17 6v4h-4M17 13c-1 5-7 6-10 2M7 19v-4h4" /><circle cx="20" cy="19.500" r="6" fill="#ff9a00" stroke="none" /></svg>
        <svg viewBox="0 0 28 20" className="ml-[11px] h-[20px] w-[27px]" fill="none" stroke="#111" strokeWidth="1.700"><path d="M9 5h15v12H9M2.500 0v5M6.500 0v5M1 5h7v2c0 2-1.500 3-3.500 3S1 9 1 7zM4.500 10v7H9" /><path d="M10 7.500h9l-2 7h-7z" fill="#111" stroke="none" /><path d="M26 9v4" strokeWidth="2.500" /></svg>
        <svg viewBox="0 0 20 20" className="mt-[2px] ml-[16px] h-[20px] w-[20px]" fill="none" stroke="#222" strokeWidth="1.600"><path d="M1 19C1 9 9 1 19 1M5.500 19C5.500 11.500 11.500 5.500 19 5.500M10 19c0-5 4-9 9-9M14 19c0-3 2-5 5-5" /><circle cx="17.500" cy="18" r="2" fill="#222" stroke="none" /></svg>
        <div className="ml-[16px] w-[40px] pt-[2px] text-center text-[17.300px] leading-[28.500px]"><div>ESP</div><div>ES</div></div>
        <div className="ml-[14px] w-[108px] pt-[1.500px] text-center text-[18.100px] leading-[29.500px] whitespace-nowrap"><div>06:31 p. m.</div><div>16/12/2023</div></div>
        <div className="relative ml-[25px] h-[30px] w-[26px]">
          <svg viewBox="0 0 26 28" className="h-[28px] w-[26px]"><path d="M0 0h26v22h-9l-5 5v-5H0z" fill="#000" /><path d="M5 6h16M5 11h16M5 16h10" stroke="#f5e3f5" strokeWidth="1.800" /></svg>
          <span className="absolute top-[13px] left-[11px] flex h-[26px] w-[26px] items-center justify-center rounded-full border-2 border-[#8d8690] bg-[#dcd4dc] text-[17px] font-semibold text-black">3</span>
        </div>
        <span className="mr-[6px] ml-auto h-[64px] w-px bg-[#b9adb9]" />
      </div>
    </div>
  );
}

export default function App() {
  return (
    <div className="h-[1152px] w-[2048px] overflow-hidden">
      <TabStrip />
      <Toolbar />
      <Bookmarks />
      <Page />
      <Taskbar />
    </div>
  );
}
